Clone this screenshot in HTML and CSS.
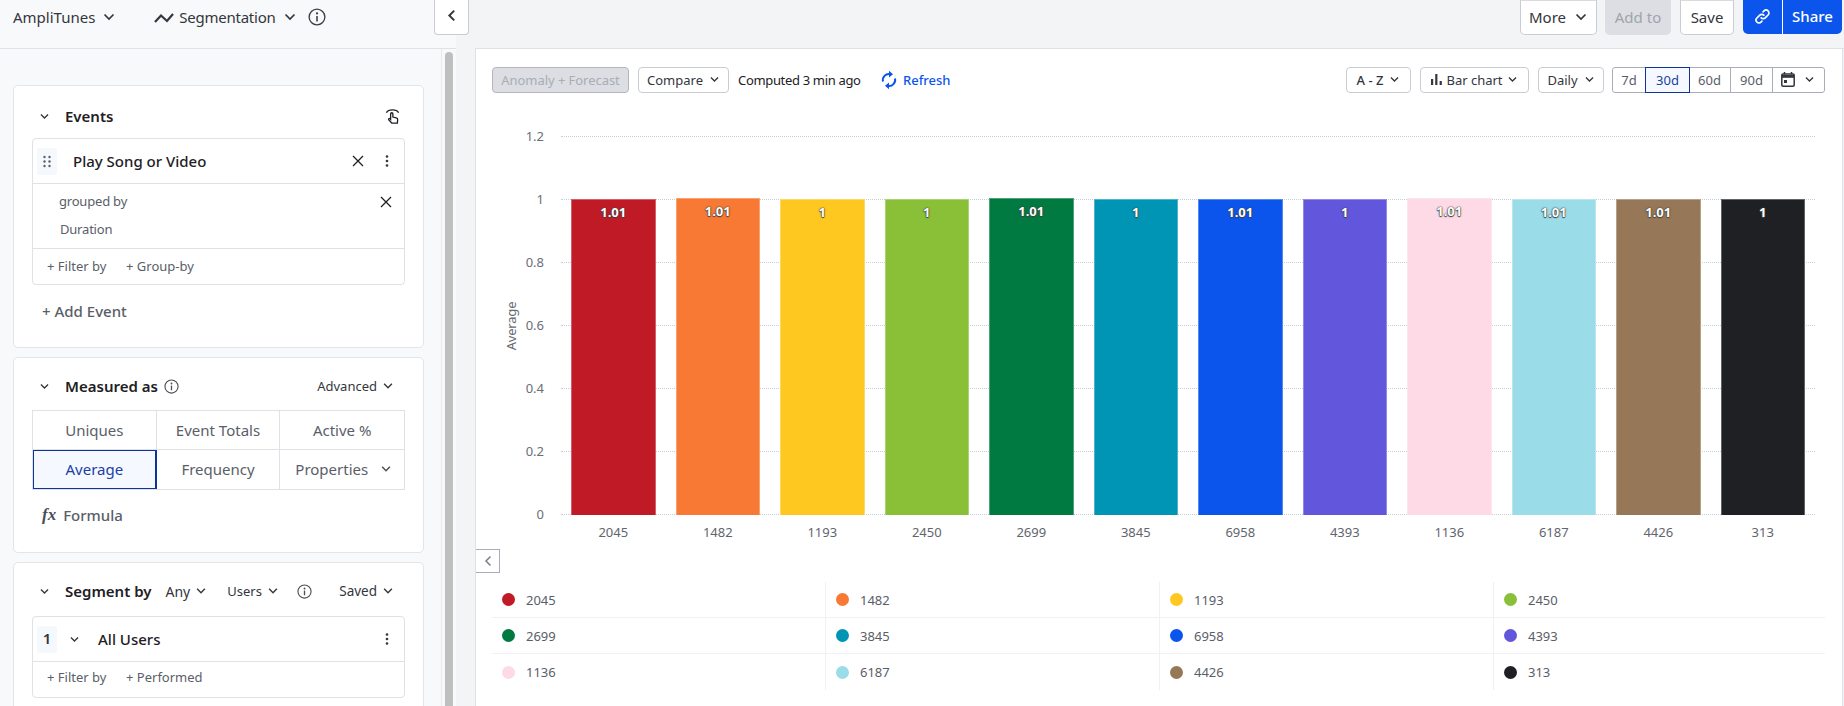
FILE: index.html
```html
<!DOCTYPE html>
<html lang="en">
<head>
<meta charset="utf-8">
<title>AmpliTunes Segmentation</title>
<link rel="stylesheet" href="styles.css">
</head>
<body>
<svg class="sprite" aria-hidden="true">
  <symbol id="chev" viewBox="0 0 14 14"><path d="M2.5 4.5 7 9l4.5-4.5" fill="none" stroke="currentColor" stroke-width="1.7"/></symbol>
  <symbol id="info" viewBox="0 0 16 16"><circle cx="8" cy="8" r="7" fill="none" stroke="currentColor" stroke-width="1.2"/><circle cx="8" cy="4.8" r="1" fill="currentColor"/><path d="M8 7v5" stroke="currentColor" stroke-width="1.4"/></symbol>
  <symbol id="x" viewBox="0 0 12 12"><path d="M1 1l10 10M11 1 1 11" stroke="currentColor" stroke-width="1.3" fill="none"/></symbol>
  <symbol id="kebab" viewBox="0 0 4 12"><circle cx="2" cy="1.5" r="1.3" fill="currentColor"/><circle cx="2" cy="6" r="1.3" fill="currentColor"/><circle cx="2" cy="10.5" r="1.3" fill="currentColor"/></symbol>
</svg>

<header class="topbar">
  <div class="top-left">
    <span class="top-title">AmpliTunes</span>
    <svg class="chev-top gap-a"><use href="#chev"/></svg>
    <svg class="seg-icon" viewBox="0 0 20 12"><path d="M1 11 7 4.500l6 5.500 6-7" fill="none" stroke="currentColor" stroke-width="2.200"/></svg>
    <span class="top-title title-seg">Segmentation</span>
    <svg class="chev-top gap-b"><use href="#chev"/></svg>
    <svg class="info-top"><use href="#info"/></svg>
  </div>
  <button class="collapse"><svg viewBox="0 0 10 12"><path d="M7.5 1.5 3 6l4.500 4.500" fill="none" stroke="currentColor" stroke-width="1.800"/></svg></button>
  <div class="top-right">
    <button class="tbtn tbtn-more">More<svg class="chev-top"><use href="#chev"/></svg></button>
    <button class="tbtn tbtn-add">Add to</button>
    <button class="tbtn tbtn-save">Save</button>
    <div class="share">
      <button class="share-link"><svg viewBox="0 0 18 18"><g fill="none" stroke="currentColor" stroke-width="1.8" stroke-linecap="round"><path d="M7.6 10.4a3 3 0 0 0 4.3 0l3-3a3 3 0 0 0-4.3-4.3l-1 1"/><path d="M10.4 7.6a3 3 0 0 0-4.3 0l-3 3a3 3 0 0 0 4.3 4.3l1-1"/></g></svg></button>
      <button class="share-text">Share</button>
    </div>
  </div>
</header>

<div class="workspace">
  <aside class="sidebar">
    <div class="side-scroll">
      <section class="card card-events">
        <div class="card-head head-events">
          <svg class="chev-sm"><use href="#chev"/></svg>
          <h2>Events</h2>
          <svg class="tap" viewBox="0 0 16 18"><g fill="none" stroke="currentColor" stroke-width="1.4"><path d="M1.500 5C3.500 1 12.500 1 14.500 5"/><path d="M6 12V6.200a1.200 1.200 0 0 1 2.400 0V9.600l3.600.8c1 .2 1.600 1 1.500 2l-.3 3.600H7.200L4 12.600c-.7-.8.5-2 1.400-1.200z" fill="#fff"/></g></svg>
        </div>
        <div class="box">
          <div class="box-row row-title">
            <span class="handle"><svg viewBox="0 0 8 12"><g fill="#5c606b"><circle cx="1.5" cy="1.5" r="1.2"/><circle cx="6.5" cy="1.5" r="1.2"/><circle cx="1.5" cy="6" r="1.2"/><circle cx="6.5" cy="6" r="1.2"/><circle cx="1.5" cy="10.5" r="1.2"/><circle cx="6.5" cy="10.5" r="1.2"/></g></svg></span>
            <span class="row-name">Play Song or Video</span>
            <svg class="ico-x"><use href="#x"/></svg>
            <svg class="ico-kebab"><use href="#kebab"/></svg>
          </div>
          <div class="box-row row-group">
            <div class="group-text">
              <span class="group-by">grouped by</span>
              <span class="group-val">Duration</span>
            </div>
            <svg class="ico-x ico-x-group"><use href="#x"/></svg>
          </div>
          <div class="box-row row-links">
            <span class="link-a">+ Filter by</span><span>+ Group-by</span>
          </div>
        </div>
        <div class="add-event">+ Add Event</div>
      </section>

      <section class="card card-measure">
        <div class="card-head head-measure">
          <svg class="chev-sm"><use href="#chev"/></svg>
          <h2>Measured as</h2>
          <svg class="info-sm"><use href="#info"/></svg>
          <span class="head-opt push">Advanced</span>
          <svg class="chev-opt"><use href="#chev"/></svg>
        </div>
        <div class="metric-grid">
          <div class="metric">Uniques</div>
          <div class="metric">Event Totals</div>
          <div class="metric">Active %</div>
          <div class="metric metric-on">Average</div>
          <div class="metric">Frequency</div>
          <div class="metric metric-prop">Properties<svg class="chev-prop"><use href="#chev"/></svg></div>
        </div>
        <div class="formula"><span class="fx">fx</span>Formula</div>
      </section>

      <section class="card card-segment">
        <div class="card-head head-segment">
          <svg class="chev-sm"><use href="#chev"/></svg>
          <h2>Segment by</h2>
          <span class="head-opt opt-any">Any</span>
          <svg class="chev-opt"><use href="#chev"/></svg>
          <span class="head-opt opt-users">Users</span>
          <svg class="chev-opt"><use href="#chev"/></svg>
          <svg class="info-sm info-seg"><use href="#info"/></svg>
          <span class="head-opt push">Saved</span>
          <svg class="chev-opt"><use href="#chev"/></svg>
        </div>
        <div class="box">
          <div class="box-row row-title">
            <span class="handle handle-num">1</span>
            <svg class="chev-sm chev-user"><use href="#chev"/></svg>
            <span class="row-name row-name-user">All Users</span>
            <svg class="ico-kebab kebab-user"><use href="#kebab"/></svg>
          </div>
          <div class="box-row row-links row-links-user">
            <span class="link-a">+ Filter by</span><span>+ Performed</span>
          </div>
        </div>
      </section>
    </div>
    <div class="scrollbar"><div class="thumb"></div></div>
  </aside>

  <main class="panel">
    <div class="toolbar">
      <div class="tool-group">
        <button class="cbtn cbtn-off">Anomaly + Forecast</button>
        <button class="cbtn cbtn-compare">Compare<svg class="chev-c"><use href="#chev"/></svg></button>
        <span class="computed">Computed 3 min ago</span>
        <span class="refresh"><svg viewBox="0 0 16 20"><g fill="none" stroke="currentColor" stroke-width="2"><path d="M2 11.5A6 6 0 0 1 9 4.2"/><path d="M14 8.5A6 6 0 0 1 7 15.8"/></g><path d="M8 0.8 12 4.3 8 7.4zM8 12.6 4 15.7 8 19.2z" fill="currentColor"/></svg>Refresh</span>
      </div>
      <div class="tool-group tool-right">
        <button class="cbtn cbtn-az">A - Z<svg class="chev-c"><use href="#chev"/></svg></button>
        <button class="cbtn cbtn-chart"><svg class="bar-ico" viewBox="0 0 12 12"><path d="M0 5.5h2.4V12H0zM4.6 0H7v12H4.6zM9.4 7.5h2.4V12H9.4z" fill="currentColor"/></svg>Bar chart<svg class="chev-c"><use href="#chev"/></svg></button>
        <button class="cbtn cbtn-daily">Daily<svg class="chev-c"><use href="#chev"/></svg></button>
        <div class="ranges">
          <span class="range r7">7d</span>
          <span class="range r30 range-on">30d</span>
          <span class="range r60">60d</span>
          <span class="range r90">90d</span>
          <span class="range rcal"><svg class="cal" viewBox="0 0 14 15"><path d="M3.5 0v2.500M10.500 0v2.500" stroke="currentColor" stroke-width="1.500"/><rect x=".8" y="2" width="12.400" height="12.200" rx="1.200" fill="none" stroke="currentColor" stroke-width="1.500"/><path d="M1 3h12v2.800H1z" fill="currentColor"/><rect x="3" y="8" width="3" height="3" fill="currentColor"/></svg><svg class="chev-c"><use href="#chev"/></svg></span>
        </div>
      </div>
    </div>

    <div class="chart">
      <div class="y-title"><span>Average</span></div>
      <div class="y-axis">
        <span>1.2</span><span>1</span><span>0.8</span><span>0.6</span><span>0.4</span><span>0.2</span><span>0</span>
      </div>
      <div class="plot-wrap">
        <div class="plot">
          <div class="grid-lines"><i></i><i></i><i></i><i></i><i></i><i></i><i></i></div>
          <div class="bars">
            <div class="band"><div class="bar" style="height:316px;background:#c01a27"><b>1.01</b></div></div>
            <div class="band"><div class="bar" style="height:317px;background:#f77933"><b>1.01</b></div></div>
            <div class="band"><div class="bar" style="height:316px;background:#ffc821"><b>1</b></div></div>
            <div class="band"><div class="bar" style="height:316px;background:#89c037"><b>1</b></div></div>
            <div class="band"><div class="bar" style="height:317px;background:#007a41"><b>1.01</b></div></div>
            <div class="band"><div class="bar" style="height:316px;background:#0095b5"><b>1</b></div></div>
            <div class="band"><div class="bar" style="height:316px;background:#0b55ed"><b>1.01</b></div></div>
            <div class="band"><div class="bar" style="height:316px;background:#6156dc"><b>1</b></div></div>
            <div class="band"><div class="bar" style="height:317px;background:#fddae6"><b>1.01</b></div></div>
            <div class="band"><div class="bar" style="height:316px;background:#9adce8"><b>1.01</b></div></div>
            <div class="band"><div class="bar" style="height:316px;background:#967757"><b>1.01</b></div></div>
            <div class="band"><div class="bar" style="height:316px;background:#1f2024"><b>1</b></div></div>
          </div>
        </div>
        <div class="x-axis">
          <span>2045</span><span>1482</span><span>1193</span><span>2450</span><span>2699</span><span>3845</span><span>6958</span><span>4393</span><span>1136</span><span>6187</span><span>4426</span><span>313</span>
        </div>
      </div>
    </div>

    <button class="legend-toggle"><svg viewBox="0 0 10 12"><path d="M7.500 1.500 3 6l4.500 4.500" fill="none" stroke="currentColor" stroke-width="1.500"/></svg></button>

    <div class="legend">
      <div class="leg"><i style="background:#c01a27"></i>2045</div>
      <div class="leg"><i style="background:#f77933"></i>1482</div>
      <div class="leg"><i style="background:#ffc821"></i>1193</div>
      <div class="leg"><i style="background:#89c037"></i>2450</div>
      <div class="leg"><i style="background:#007a41"></i>2699</div>
      <div class="leg"><i style="background:#0095b5"></i>3845</div>
      <div class="leg"><i style="background:#0b55ed"></i>6958</div>
      <div class="leg"><i style="background:#6156dc"></i>4393</div>
      <div class="leg"><i style="background:#fddae6"></i>1136</div>
      <div class="leg"><i style="background:#9adce8"></i>6187</div>
      <div class="leg"><i style="background:#967757"></i>4426</div>
      <div class="leg"><i style="background:#1f2024"></i>313</div>
    </div>
  </main>
</div>
</body>
</html>
```

FILE: styles.css
```css
* { box-sizing: border-box; }
html, body { margin: 0; height: 706px; overflow: hidden; }
body { background: #f3f4f6; color: #1e2024; font-family: "Noto Sans", "Open Sans", sans-serif; font-size: 13px; position: relative; }
button { font: inherit; color: inherit; background: #fff; padding: 0; margin: 0; }
svg { display: block; flex: none; }
.sprite { display: none; }

/* top bar */
.topbar { display: flex; justify-content: space-between; height: 49px; }
.top-left { width: 456px; height: 49px; background: #f8f9fa; border-bottom: 1px solid #dfe1e6; display: flex; align-items: center; padding: 0 0 15px 13px; }
.top-title { font-size: 15px; color: #33363c; }
.title-seg { letter-spacing: -.25px; }
.chev-top { width: 14px; height: 14px; color: #33363c; }
.gap-a { margin-left: 7px; margin-right: 38px; }
.gap-b { margin-left: 7px; margin-right: 11px; }
.seg-icon { width: 20px; height: 12px; margin-right: 5px; color: #33363c; }
.info-top { width: 18px; height: 18px; color: #3c3f46; }
.collapse { position: absolute; left: 434px; top: 0; width: 35px; height: 35px; border: 1px solid #c9ccd3; border-top: 0; border-radius: 0 0 4px 4px; display: flex; align-items: center; justify-content: center; color: #33363c; }
.collapse svg { width: 11px; height: 13px; margin-top: -4px; }
.top-right { display: flex; gap: 8px; padding-right: 2px; border-bottom: 1px solid #dfe1e6; width: 1369px; justify-content: flex-end; align-items: flex-start; }
.tbtn { height: 35px; border: 1px solid #c9ccd3; border-top-color: #d8dade; border-radius: 0 0 5px 5px; font-size: 15px; color: #33363c; display: flex; align-items: center; justify-content: center; padding-bottom: 2px; }
.tbtn-more { width: 77px; gap: 8px; }
.tbtn-add { width: 66px; background: #dcdee3; border: 0; color: #a0a4ad; margin-right: 1px; }
.tbtn-save { width: 54px; margin-right: 1px; }
.share { display: flex; height: 34px; background: #0b55ed; border-radius: 0 0 5px 5px; color: #fff; font-size: 15px; font-weight: 500; width: 99px; }
.share button { background: none; border: 0; color: #fff; display: flex; align-items: center; justify-content: center; padding-bottom: 2px; }
.share-link { width: 40px; border-right: 1px solid #fff !important; }
.share-link svg { width: 17px; height: 17px; }
.share-text { flex: 1; font-weight: 500; }

/* layout */
.workspace { display: flex; height: 657px; }
.sidebar { width: 456px; background: #f8f9fa; display: flex; overflow: hidden; margin-right: 19px; }
.side-scroll { width: 441px; padding: 36px 0 0 13px; }
.scrollbar { width: 15px; border-left: 1px solid #e6e8eb; padding: 3px 3px 0 3px; }
.thumb { height: 100%; background: #bfbfbf; border-radius: 4px 4px 0 0; }

.card { width: 411px; background: #fff; border: 1px solid #e3e5e9; border-radius: 5px; padding: 0 18px; margin-bottom: 9px; }
.card-events { height: 263px; }
.card-measure { height: 196px; }
.card-segment { height: 300px; margin-bottom: 0; }
.card-head { display: flex; align-items: center; height: 52px; color: #1e2024; }
.head-events { padding-top: 8px; }
.card-head h2 { margin: 0; font-size: 15px; font-weight: 600; }
.chev-sm { width: 11px; height: 11px; margin: 0 15px 0 7px; color: #33363c; }
.tap { width: 15px; height: 17px; margin-left: auto; margin-right: 5px; color: #1e2024; }
.box { border: 1px solid #dfe1e6; border-radius: 4px; width: 373px; }
.box-row { display: flex; align-items: center; }
.box-row + .box-row { border-top: 1px solid #dfe1e6; }
.row-title { height: 44px; padding-left: 4px; }
.handle { width: 20px; height: 27px; background: #f5f8fd; border-radius: 2px; display: flex; align-items: center; justify-content: center; margin-right: 16px; }
.handle svg { width: 8px; height: 13px; }
.row-name { font-size: 15px; font-weight: 500; }
.ico-x { width: 12px; height: 12px; margin-left: auto; color: #1e2024; }
.row-title .ico-x { margin-right: -3px; }
.ico-kebab { width: 4px; height: 12px; margin-left: 24px; margin-right: 15px; color: #33363c; }
.row-group { height: 65px; padding-left: 26px; align-items: flex-start; }
.group-text { display: flex; flex-direction: column; color: #5a5e68; font-size: 13px; padding-top: 8px; line-height: 18px; letter-spacing: -.2px; }
.group-val { padding-left: 1px; margin-top: 10px; }
.ico-x-group { margin-top: 12px; margin-right: 12px; }
.row-links { height: 36px; padding-left: 14px; padding-bottom: 2px; color: #5a5e68; font-size: 13px; }
.row-links-user { padding-bottom: 5px; }
.link-a { width: 79px; }
.add-event { font-size: 15px; font-weight: 500; color: #5a5e68; padding: 16px 0 0 10px; }

.head-measure { height: 52px; padding-top: 4px; }
.info-sm { width: 15px; height: 15px; margin-left: 6px; color: #4b4e57; }
.head-opt { font-size: 13px; color: #33363c; }
.push { margin-left: auto; }
.chev-opt { width: 12px; height: 12px; margin-left: 5px; margin-right: 11px; color: #33363c; }
.metric-grid { display: grid; grid-template-columns: repeat(3, 1fr); width: 373px; height: 80px; border: 1px solid #dfe1e6; }
.metric { display: flex; align-items: center; justify-content: center; color: #5a5e68; font-size: 15px; border-right: 1px solid #dfe1e6; border-bottom: 1px solid #dfe1e6; padding-bottom: 1px; }
.metric:nth-child(3n) { border-right: 0; }
.metric:nth-child(n+4) { border-bottom: 0; }
.metric-on { background: #f5f9ff; color: #1a3fa5; box-shadow: inset 0 0 0 1px #0d3597; outline: 1px solid #0d3597; outline-offset: -1px; padding-bottom: 2px; }
.metric-prop { justify-content: flex-start; padding-left: 15px; }
.chev-prop { width: 12px; height: 12px; margin-left: auto; margin-right: 12px; color: #4b4e57; }
.formula { display: flex; align-items: center; font-size: 15px; font-weight: 500; color: #5a5e68; padding: 15px 0 0 10px; }
.fx { font-family: "Liberation Serif", serif; font-style: italic; font-weight: 700; font-size: 17px; margin-right: 7px; color: #4b4e57; }

.head-segment { height: 53px; padding-top: 3px; }
.opt-any { margin-left: 14px; font-size: 14px; }
.chev-opt + .opt-users { margin-left: 9px; }
.opt-users { font-size: 13px; }
.info-seg { margin-left: 7px; }
.head-segment .head-opt.push { margin-left: auto; font-size: 13.500px; }
.handle-num { font-size: 15px; font-weight: 600; color: #33363c; margin-right: 12px; padding-bottom: 2px; }
.chev-user { margin: 0 18px 0 0; }
.row-name-user { font-weight: 500; padding-bottom: 1px; }
.kebab-user { margin-left: auto; }

/* chart panel */
.panel { flex: 1; background: #fff; border: 1px solid #dfe1e6; border-top: 0; border-bottom: 0; margin-right: 1px; min-width: 0; }
.toolbar { display: flex; justify-content: space-between; padding: 18px 17px 0 16px; height: 44px; }
.tool-group { display: flex; align-items: center; gap: 9px; height: 26px; }
.cbtn { height: 26px; border: 1px solid #c9ccd3; border-radius: 4px; font-size: 13px; color: #33363c; display: flex; align-items: center; justify-content: center; gap: 6px; padding-bottom: 1px; }
.cbtn-off { width: 137px; background: #dcdee3; border-color: #b3b6bd; color: #a9adb6; letter-spacing: -.05px; }
.cbtn-compare { width: 91px; }
.computed { color: #1e2024; width: 134px; white-space: nowrap; letter-spacing: -.33px; padding-bottom: 1px; }
.refresh { display: flex; align-items: center; gap: 6px; color: #0b55ed; font-weight: 500; padding-bottom: 1px; }
.refresh svg { width: 16px; height: 20px; }
.chev-c { width: 11px; height: 11px; color: #33363c; }
.cbtn-az { width: 65px; font-weight: 500; }
.cbtn-chart { width: 109px; gap: 4px; }
.cbtn-daily { width: 66px; }
.tool-right { gap: 9px; }
.bar-ico { width: 11px; height: 11px; }
.ranges { display: flex; height: 26px; border: 1px solid #a8adb8; border-radius: 3px; width: 213px; margin-left: -1px; }
.range { display: flex; align-items: center; justify-content: center; color: #5a5e68; border-right: 1px solid #a8adb8; gap: 9px; padding-bottom: 1px; }
.r7 { width: 33px; }
.r30 { width: 43px; }
.r60 { width: 42px; }
.r90 { width: 42px; }
.rcal { flex: 1; border-right: 0; color: #33363c; padding-right: 2px; }
.range-on { background: #f5f9ff; color: #1a3fa5; box-shadow: 0 0 0 1px #0d3597; position: relative; border-right: 0; }
.cal { width: 14px; height: 15px; }

.chart { display: flex; height: 457px; padding-top: 43px; }
.y-title { width: 36px; height: 379px; display: flex; align-items: center; justify-content: center; color: #666a73; font-size: 13px; margin-left: 17px; margin-right: -6px; letter-spacing: -.2px; }
.y-title span { transform: rotate(-90deg); white-space: nowrap; }
.y-axis { width: 21px; height: 379px; display: flex; flex-direction: column; justify-content: space-between; align-items: flex-end; margin-right: 17px; color: #6b6e75; font-size: 13px; }
.y-axis span { height: 1px; line-height: 1px; }
.plot-wrap { width: 1254px; }
.plot { display: grid; height: 379px; align-items: end; }
.grid-lines { grid-area: 1 / 1; height: 379px; display: flex; flex-direction: column; justify-content: space-between; }
.grid-lines i { display: block; border-top: 1px dotted #c3d0de; height: 0; }
.bars { grid-area: 1 / 1; display: flex; align-items: flex-end; height: 379px; }
.band { flex: 1; padding: 0 10px; }
.bar { border: 1px solid rgba(255,255,255,.3); border-bottom: 0; text-align: center; padding-top: 4px; }
.bar b { display: block; color: #fff; font-size: 13px; font-weight: 700; line-height: 16px; text-shadow: 0 0 1px #222, 0 1px 1px #444, 0 0 2px #555; }
.x-axis { display: flex; height: 34px; align-items: center; color: #62656d; font-size: 13px; }
.x-axis span { flex: 1; text-align: center; }

.legend-toggle { display: flex; align-items: center; justify-content: center; width: 24px; height: 24px; border: 1px solid #a8adb8; border-left: 0; color: #7a7e88; margin-top: -1px; }
.legend-toggle svg { width: 10px; height: 12px; }
.legend { display: grid; grid-template-columns: repeat(3, 334px) 331px; grid-auto-rows: 36px; margin: 9px 0 0 16px; width: 1333px; }
.leg { display: flex; align-items: center; gap: 11px; padding-left: 10px; color: #5a5e68; font-size: 13px; border-right: 1px solid #f0f1f3; border-bottom: 1px solid #f0f1f3; }
.leg:nth-child(4n) { border-right: 0; }
.leg:nth-child(n+9) { border-bottom: 0; }
.leg i { width: 13px; height: 13px; border-radius: 50%; display: block; }
```
